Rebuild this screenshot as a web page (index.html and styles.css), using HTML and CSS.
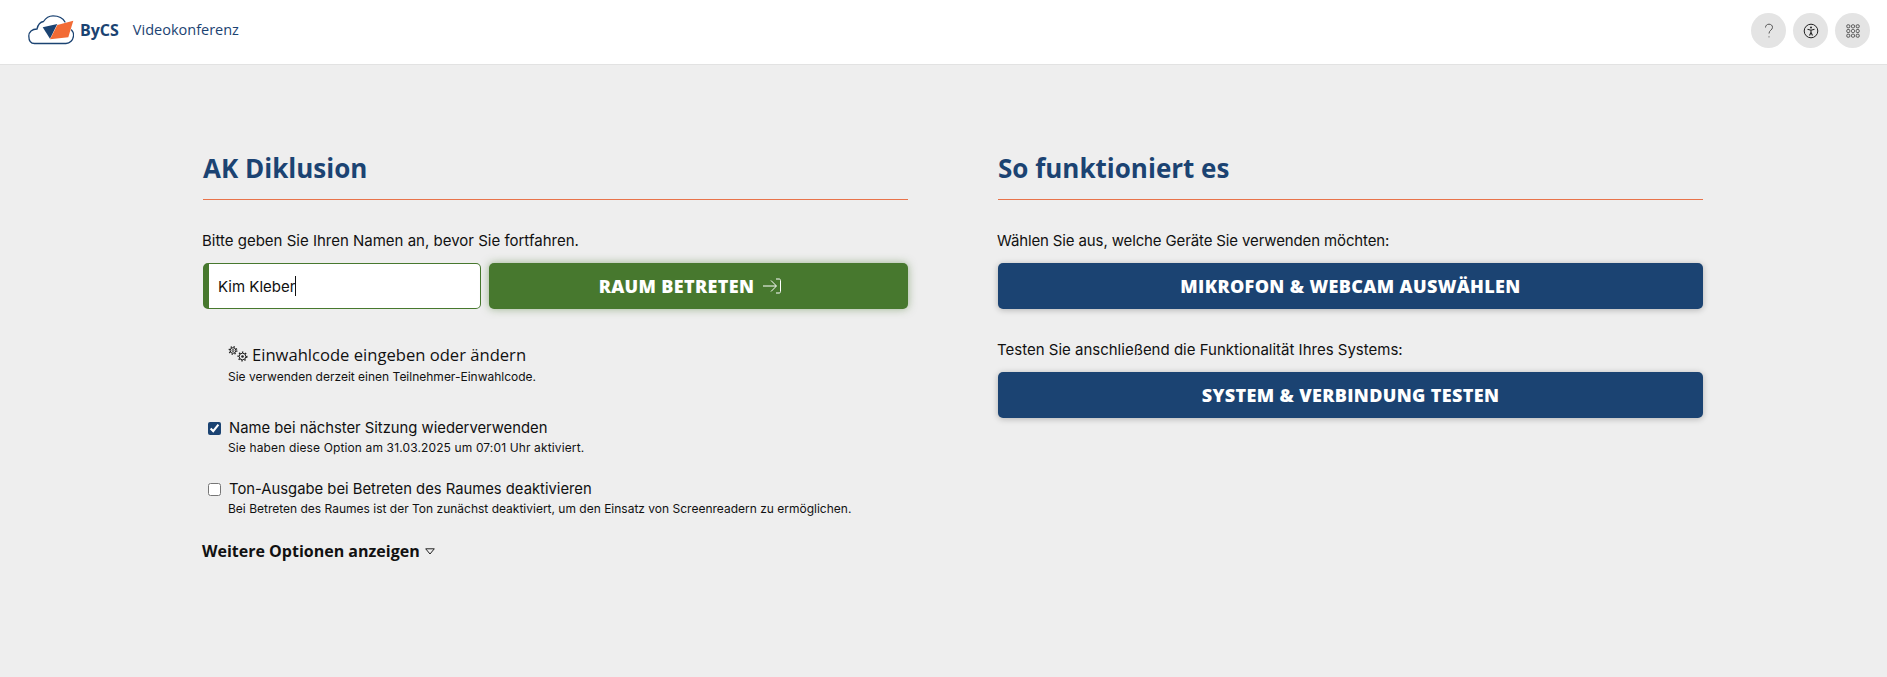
FILE: index.html
```html
<!DOCTYPE html>
<html lang="de">
<head>
<meta charset="utf-8">
<title>ByCS Videokonferenz</title>
<link rel="stylesheet" href="styles.css">
</head>
<body>
<header class="topbar">
  <div class="brand">
    <svg class="logo" width="46" height="30" viewBox="0 0 46 30" fill="none">
      <path d="M37 7C35 3 30 .8 25 .8C21 .8 18 2.500 15.500 6.500C12 7 10 9.500 9 14C4 14 .8 17 .8 21C.8 25 2.500 28.500 6.500 28.500H38C42 28.500 45 25 45.500 21C45.800 18.500 45 16.500 43.500 15" stroke="#1b4372" stroke-width="1.300" stroke-linecap="round"/>
      <path d="M14.700 12.300L29.300 9L22 23.700Z" fill="#1b4372"/>
      <path d="M45.300 5.700L40.300 22.300L22 24.300L29.300 10Z" fill="#f26b35"/>
    </svg>
    <span class="brand-name">ByCS</span>
    <span class="brand-app">Videokonferenz</span>
  </div>
  <nav class="tools">
    <button class="tool" aria-label="Hilfe">
      <svg width="18" height="18" viewBox="0 0 18 18" fill="none" stroke="#555" stroke-width="1"><path d="M5.500 5.500C5.500 3.500 7 2.200 9 2.200C11 2.200 12.500 3.500 12.500 5.300C12.500 8 9 8.300 9 11.500"/><circle cx="9" cy="14.800" r=".6" fill="#555" stroke="none"/></svg>
    </button>
    <button class="tool" aria-label="Barrierefreiheit">
      <svg width="16" height="16" viewBox="0 0 16 16" fill="none" stroke="#222" stroke-width="1"><circle cx="8" cy="8" r="6.800"/><circle cx="8" cy="4.600" r="1" fill="#222" stroke="none"/><path d="M4.500 6.300L8 7.200L11.500 6.300M8 7.200V9.500M8 9.500L6.500 12.500M8 9.500L9.500 12.500" stroke-width="1.100"/></svg>
    </button>
    <button class="tool" aria-label="Apps">
      <svg width="14" height="14" viewBox="0 0 14 14" fill="none" stroke="#444" stroke-width=".9"><rect x=".8" y=".8" width="3" height="3" rx="1"/><rect x="5.500" y=".8" width="3" height="3" rx="1"/><rect x="10.200" y=".8" width="3" height="3" rx="1"/><rect x=".8" y="5.500" width="3" height="3" rx="1"/><rect x="5.500" y="5.500" width="3" height="3" rx="1"/><rect x="10.200" y="5.500" width="3" height="3" rx="1"/><rect x=".8" y="10.200" width="3" height="3" rx="1"/><rect x="5.500" y="10.200" width="3" height="3" rx="1"/><rect x="10.200" y="10.200" width="3" height="3" rx="1"/></svg>
    </button>
  </nav>
</header>
<main class="content">
  <section class="col">
    <h1 class="title">AK Diklusion</h1>
    <p class="lead">Bitte geben Sie Ihren Namen an, bevor Sie fortfahren.</p>
    <div class="join">
      <div class="name-field"><span class="name-value">Kim Kleber</span><span class="caret"></span></div>
      <button class="btn btn-green">RAUM BETRETEN
        <svg class="enter" width="20" height="16" viewBox="0 0 20 16" fill="none" stroke="#fff" stroke-width="1"><path d="M1 8H14M9 2.500L14.500 8L9 13.500M14 1H17C18 1 18.500 1.500 18.500 2.500V13.500C18.500 14.500 18 15 17 15H14"/></svg>
      </button>
    </div>
    <div class="dial">
      <div class="dial-title">
        <svg width="21" height="18" viewBox="0 0 21 18" fill="none" stroke="#222"><circle cx="5" cy="5.500" r="2.800" stroke-width="1"/><circle cx="5" cy="5.500" r="3.800" stroke-width="1.300" stroke-dasharray="1.300 1.700"/><circle cx="5" cy="5.500" r="1" stroke-width=".8"/><circle cx="14.500" cy="11.500" r="3.300" stroke-width="1"/><circle cx="14.500" cy="11.500" r="4.300" stroke-width="1.400" stroke-dasharray="1.400 1.800"/><circle cx="14.500" cy="11.500" r="1.300" fill="#222" stroke="none"/></svg>
        <span>Einwahlcode eingeben oder ändern</span>
      </div>
      <p class="hint">Sie verwenden derzeit einen Teilnehmer-Einwahlcode.</p>
    </div>
    <div class="option option-first">
      <label class="check-row"><input type="checkbox" checked><span>Name bei nächster Sitzung wiederverwenden</span></label>
      <p class="hint hint-wide">Sie haben diese Option am 31.03.2025 um 07:01 Uhr aktiviert.</p>
    </div>
    <div class="option">
      <label class="check-row"><input type="checkbox"><span>Ton-Ausgabe bei Betreten des Raumes deaktivieren</span></label>
      <p class="hint">Bei Betreten des Raumes ist der Ton zunächst deaktiviert, um den Einsatz von Screenreadern zu ermöglichen.</p>
    </div>
    <div class="more"><span>Weitere Optionen anzeigen</span>
      <svg width="10" height="7" viewBox="0 0 10 7" fill="none" stroke="#222" stroke-width="1"><path d="M.7 .8H9.300L5 6Z"/></svg>
    </div>
  </section>
  <section class="col">
    <h1 class="title">So funktioniert es</h1>
    <p class="lead lead-tight">Wählen Sie aus, welche Geräte Sie verwenden möchten:</p>
    <button class="btn btn-blue">MIKROFON &amp; WEBCAM AUSWÄHLEN</button>
    <p class="lead lead-second">Testen Sie anschließend die Funktionalität Ihres Systems:</p>
    <button class="btn btn-blue">SYSTEM &amp; VERBINDUNG TESTEN</button>
  </section>
</main>
</body>
</html>
```
FILE: styles.css
```css
* { box-sizing: border-box; }
html, body { margin: 0; height: 100%; }
body {
  background: #eeeeee;
  font-family: Inter, "Liberation Sans", sans-serif;
  color: #111;
  overflow: hidden;
}
.topbar {
  height: 65px;
  background: #fff;
  border-bottom: 1px solid #e2e2e2;
  display: flex;
  align-items: center;
  justify-content: space-between;
  padding: 0 17px 0 28px;
}
.brand { display: flex; align-items: center; height: 100%; padding-bottom: 5px; }
.logo { margin-right: 6px; }
.brand-name { font: 700 16px "Open Sans", sans-serif; color: #1b4372; margin-right: 14px; }
.brand-app { font: 500 14.500px "Open Sans", sans-serif; color: #1b4372; }
.tools { display: flex; gap: 7px; margin-bottom: 3px; }
.tool {
  width: 35px; height: 35px;
  border: 0; border-radius: 50%;
  background: #e4e4e4;
  display: flex; align-items: center; justify-content: center;
  padding: 0;
}
.content {
  display: grid;
  grid-template-columns: 705px 705px;
  column-gap: 90px;
  padding: 84px 0 0 203px;
}
.title {
  margin: 0;
  height: 51px;
  font: 700 26px/39px "Open Sans", sans-serif;
  color: #1b4372;
  border-bottom: 1px solid #e8734a;
}
.lead { margin: 31px 0 12px -1px; font-size: 15px; line-height: 20px; height: 20px; }
.lead-tight { letter-spacing: -.13px; }
.lead-second { margin-top: 31px; }
.join { display: flex; gap: 8px; }
.name-field {
  width: 278px; height: 46px;
  background: #fff;
  border: 1px solid #47782e;
  border-left-width: 6px;
  border-radius: 5px;
  display: flex; align-items: center;
  padding-left: 9px;
  font-size: 15px;
}
.caret { width: 1px; height: 20px; background: #111; }
.btn {
  height: 46px;
  border: 0; border-radius: 5px;
  color: #fff;
  font: 800 18px "Open Sans", sans-serif;
  letter-spacing: .35px;
  display: flex; align-items: center; justify-content: center;
  width: 100%;
}
.btn-green { background: #47782e; box-shadow: 0 0 8px rgba(71,120,46,.5); flex: 1; width: auto; padding-right: 22px; }
.btn-blue { background: #1b4372; box-shadow: 0 1px 6px rgba(0,0,0,.25); }
.enter { margin-left: 8px; }
.dial { margin: 34px 0 0 25px; }
.dial-title { display: flex; align-items: center; gap: 3px; font: 500 16.600px "Open Sans", sans-serif; height: 22px; }
.hint { margin: 4px 0 0; font-size: 12px; line-height: 16px; }
.option { margin-top: 23px; }
.option-first { margin-top: 33px; }
.option .hint { margin: 2px 0 0 25px; }
.option .hint-wide { letter-spacing: .13px; }
.check-row { display: flex; align-items: center; font-size: 14.800px; height: 20px; padding-left: 5px; }
.check-row input { width: 13px; height: 13px; margin: 0 8px 0 0; accent-color: #1b4372; }
.more { display: flex; align-items: center; gap: 5px; margin-top: 23px; margin-left: -1px; font: 700 16px "Open Sans", sans-serif; height: 22px; }
```
